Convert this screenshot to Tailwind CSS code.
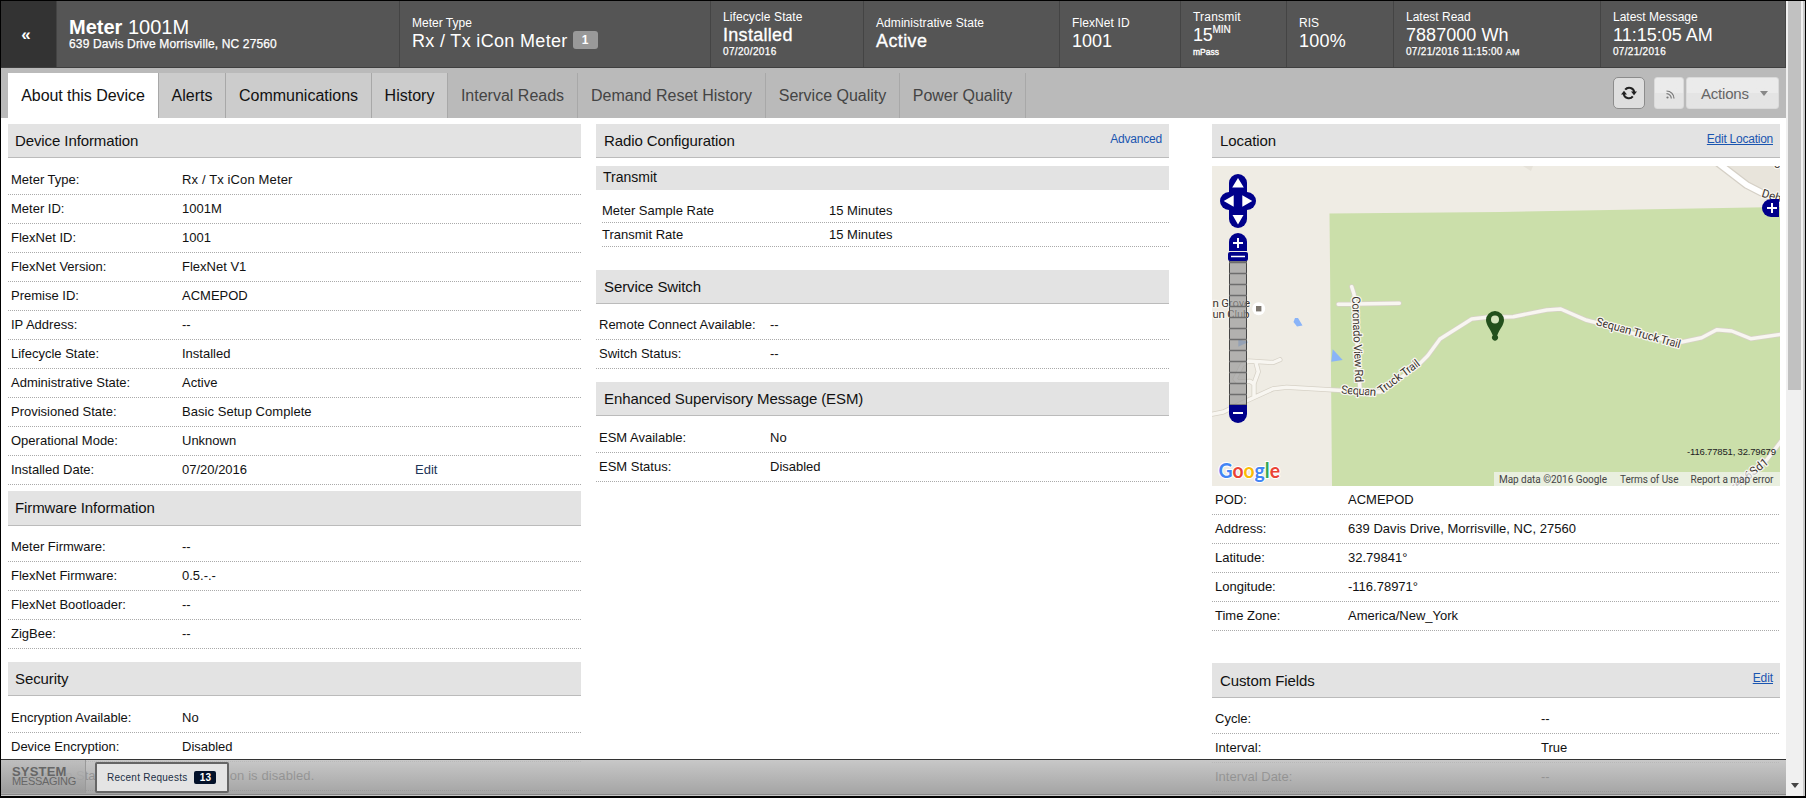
<!DOCTYPE html>
<html lang="en">
<head>
<meta charset="utf-8">
<title>Meter 1001M</title>
<script src="https://cdn.jsdelivr.net/npm/@tailwindcss/browser@4"></script>
</head>
<body class="w-[1806px] h-[798px] overflow-hidden bg-white font-['Liberation_Sans',Arial,sans-serif] text-[13px] leading-none text-[#111]">
<div class="relative flex w-[1806px] h-[798px] border border-black border-b-2 overflow-hidden">
  <div class="w-[1785px] flex flex-col shrink-0">

    <!-- device summary header -->
    <header class="flex h-[67px] shrink-0 bg-[#555] text-white text-[12px] border-b border-[#3f3f3f] [&>section]:flex [&>section]:flex-col [&>section]:justify-center [&>section]:pl-[12px] [&>section]:border-r [&>section]:border-[#444] whitespace-nowrap">
      <div class="w-[56px] bg-[#333] border-r border-[#444] flex items-center justify-center pr-[5px] text-[17px] font-bold">«</div>
      <section class="w-[343px] pb-[3px]">
        <div class="text-[20px] leading-[22px]"><b>Meter</b> 1001M</div>
        <div class="leading-[12px] tracking-[0.14px] [-webkit-text-stroke:0.25px_white]">639 Davis Drive Morrisville, NC 27560</div>
      </section>
      <section class="w-[311px]">
        <div class="-mt-px mb-px leading-[14px]">Meter Type</div>
        <div class="flex items-center text-[18px] leading-[21px] tracking-[0.33px]">Rx / Tx iCon Meter<span class="ml-[5px] mt-[-3px] w-[25px] h-[18px] rounded-[3px] bg-[#999] text-[12px] leading-[18px] font-bold text-center">1</span></div>
      </section>
      <section class="w-[153px]">
        <div class="-mt-px mb-px leading-[14px] tracking-[0.1px]">Lifecycle State</div>
        <div class="text-[18px] leading-[21px] tracking-[0.3px] [-webkit-text-stroke:0.3px_white]">Installed</div>
        <div class="text-[10px] leading-[12px] tracking-[0.35px] [-webkit-text-stroke:0.25px_white]">07/20/2016</div>
      </section>
      <section class="w-[196px]">
        <div class="-mt-px mb-px leading-[14px] tracking-[0.07px]">Administrative State</div>
        <div class="text-[18px] leading-[21px] tracking-[0.4px] [-webkit-text-stroke:0.3px_white]">Active</div>
      </section>
      <section class="w-[121px]">
        <div class="-mt-px mb-px leading-[14px] tracking-[0.1px]">FlexNet ID</div>
        <div class="text-[18px] leading-[21px]">1001</div>
      </section>
      <section class="w-[106px]">
        <div class="-mt-px mb-px leading-[14px] tracking-[0.2px]">Transmit</div>
        <div class="flex text-[18px] leading-[21px] tracking-[-0.3px]">15<span class="text-[10px] leading-[9px] tracking-normal [-webkit-text-stroke:0.2px_white]">MIN</span></div>
        <div class="text-[8.5px] leading-[12px] [-webkit-text-stroke:0.35px_white]">mPass</div>
      </section>
      <section class="w-[107px]">
        <div class="-mt-px mb-px leading-[14px]">RIS</div>
        <div class="text-[18px] leading-[21px] tracking-[0.2px]">100%</div>
      </section>
      <section class="w-[207px]">
        <div class="-mt-px mb-px leading-[14px]">Latest Read</div>
        <div class="text-[18px] leading-[21px] tracking-[0.05px]">7887000 Wh</div>
        <div class="text-[10px] leading-[12px] tracking-[0.3px] [-webkit-text-stroke:0.25px_white]">07/21/2016 11:15:00 <span class="text-[9px]">AM</span></div>
      </section>
      <section class="w-[185px]">
        <div class="-mt-px mb-px leading-[14px]">Latest Message</div>
        <div class="text-[18px] leading-[21px]">11:15:05 AM</div>
        <div class="text-[10px] leading-[12px] tracking-[0.3px] [-webkit-text-stroke:0.25px_white]">07/21/2016</div>
      </section>
    </header>

    <!-- tabs and actions -->
    <nav class="flex h-[50px] shrink-0 bg-[#bababa] pl-[7px] pt-[5px] text-[16px] text-[#444] whitespace-nowrap [&>a]:flex [&>a]:items-center [&>a]:justify-center [&>a]:border-r [&>a]:border-[#a8a8a8]">
      <a class="w-[151px] bg-white text-[#111] tracking-[-0.05px]">About this Device</a>
      <a class="w-[67px] bg-[#ccc] text-[#111]">Alerts</a>
      <a class="w-[146px] bg-[#ccc] text-[#111]">Communications</a>
      <a class="w-[76px] bg-[#ccc] text-[#111]">History</a>
      <a class="w-[130px]">Interval Reads</a>
      <a class="w-[188px]">Demand Reset History</a>
      <a class="w-[134px]">Service Quality</a>
      <a class="w-[126px]">Power Quality</a>
      <div class="ml-auto mr-[7px] mt-[4px] flex h-[32px]">
        <button class="w-[32px] h-[32px] rounded-[5px] border border-[#8c8c8c] bg-[#dedede] flex items-center justify-center">
          <svg width="16" height="14" viewBox="0 0 16 14" fill="none" stroke="#222" stroke-width="2"><path d="M4.200 3.700A5 5 0 0 1 13.200 6.500"/><path d="M11.800 10.300A5 5 0 0 1 2.800 7.500"/><path d="M0 8.500h6L3 4.700z M16 5.500h-6L13 9.300z" fill="#222" stroke="none"/></svg>
        </button>
        <button class="ml-[9px] w-[30px] h-[32px] rounded-[3px] border border-[#dadada] bg-gradient-to-b from-[#ebebeb] from-50% to-[#e4e4e4] to-50% flex items-center justify-center pl-[3px] pt-[3px]">
          <svg width="9" height="9" viewBox="0 0 9 9" fill="none" stroke="#777" stroke-width="1.2"><path d="M.5 1A7.500 7.500 0 0 1 8 8.500M.5 3.700A4.800 4.800 0 0 1 5.300 8.500"/><circle cx="1.500" cy="7.500" r="1.100" fill="#777" stroke="none"/></svg>
        </button>
        <button class="ml-[2px] w-[93px] h-[32px] rounded-[3px] border border-[#dadada] bg-gradient-to-b from-[#ebebeb] from-50% to-[#e4e4e4] to-50% flex items-center pl-[14px] text-[15px] tracking-[-0.2px] text-[#666]">Actions<svg class="ml-[11px]" width="8" height="5" viewBox="0 0 8 5"><path d="M0 0h8L4 5z" fill="#888"/></svg></button>
      </div>
    </nav>

    <!-- three content columns -->
    <main class="flex pl-[7px] pt-[6px] [&_h2]:flex [&_h2]:items-center [&_h2]:justify-between [&_h2]:h-[34px] [&_h2]:shrink-0 [&_h2]:px-[7px] [&_h2]:text-[15px] [&_h2]:tracking-[-0.1px] [&_h2]:bg-[#e3e3e3] [&_h2]:border-b [&_h2]:border-[#bbb] [&_dl>div]:flex [&_dl>div]:items-center [&_dl>div]:h-[29px] [&_dl>div]:border-b [&_dl>div]:border-dotted [&_dl>div]:border-[#aaa] [&_dl>div]:pl-[3px] [&_dl>div]:pb-[1px] [&_dt]:shrink-0 whitespace-nowrap">
      <div class="w-[573px] flex flex-col">
        <h2>Device Information</h2>
        <dl class="mt-[8px] [&_dt]:w-[171px]">
          <div><dt>Meter Type:</dt><dd class="tracking-[0.13px]">Rx / Tx iCon Meter</dd></div>
          <div><dt>Meter ID:</dt><dd>1001M</dd></div>
          <div><dt>FlexNet ID:</dt><dd>1001</dd></div>
          <div><dt>FlexNet Version:</dt><dd>FlexNet V1</dd></div>
          <div><dt>Premise ID:</dt><dd>ACMEPOD</dd></div>
          <div><dt>IP Address:</dt><dd>--</dd></div>
          <div><dt>Lifecycle State:</dt><dd>Installed</dd></div>
          <div><dt>Administrative State:</dt><dd>Active</dd></div>
          <div><dt>Provisioned State:</dt><dd class="tracking-[0.05px]">Basic Setup Complete</dd></div>
          <div><dt>Operational Mode:</dt><dd>Unknown</dd></div>
          <div><dt>Installed Date:</dt><dd class="w-[233px]">07/20/2016</dd><dd class="text-[#1c3557]">Edit</dd></div>
        </dl>
        <h2 class="mt-[6px] !h-[35px] pb-px">Firmware Information</h2>
        <dl class="mt-[7px] [&_dt]:w-[171px]">
          <div><dt>Meter Firmware:</dt><dd>--</dd></div>
          <div><dt>FlexNet Firmware:</dt><dd>0.5.-.-</dd></div>
          <div><dt>FlexNet Bootloader:</dt><dd>--</dd></div>
          <div><dt>ZigBee:</dt><dd>--</dd></div>
        </dl>
        <h2 class="mt-[13px]">Security</h2>
        <dl class="mt-[8px] [&_dt]:w-[171px]">
          <div><dt>Encryption Available:</dt><dd>No</dd></div>
          <div><dt>Device Encryption:</dt><dd>Disabled</dd></div>
          <div><dt>Encryption Status:</dt><dd class="tracking-[0.1px]">Encryption is disabled.</dd></div>
        </dl>
      </div>

      <div class="ml-[15px] w-[573px] flex flex-col [&>h2]:pl-[8px]">
        <h2>Radio Configuration<a class="text-[12px] text-[#1a55b0] pb-[4px] tracking-[-0.2px]">Advanced</a></h2>
        <div class="mt-[8px] h-[24px] shrink-0 bg-[#e3e3e3] pl-[7px] pb-[2px] flex items-center text-[14px]">Transmit</div>
        <dl class="ml-[6px] mt-[9px] [&_dt]:w-[227px] [&>div]:!h-[24px] [&>div]:!pl-0">
          <div><dt>Meter Sample Rate</dt><dd>15 Minutes</dd></div>
          <div><dt>Transmit Rate</dt><dd>15 Minutes</dd></div>
        </dl>
        <h2 class="mt-[23px]">Service Switch</h2>
        <dl class="mt-[7px] [&_dt]:w-[171px]">
          <div><dt>Remote Connect Available:</dt><dd>--</dd></div>
          <div><dt>Switch Status:</dt><dd>--</dd></div>
        </dl>
        <h2 class="mt-[13px]">Enhanced Supervisory Message (ESM)</h2>
        <dl class="mt-[8px] [&_dt]:w-[171px]">
          <div><dt>ESM Available:</dt><dd>No</dd></div>
          <div><dt>ESM Status:</dt><dd>Disabled</dd></div>
        </dl>
      </div>

      <div class="ml-[43px] w-[568px] flex flex-col [&>h2]:pl-[8px]">
        <h2>Location<a class="text-[12px] text-[#1a55b0] underline pb-[4px] tracking-[-0.25px]">Edit Location</a></h2>
        <svg class="mt-[8px] shrink-0" width="568" height="320" viewBox="0 0 568 320" font-family="Roboto, sans-serif">
          <rect width="568" height="320" fill="#efece4"/>
          <path d="M514 0H568V40L548 26 536 18z" fill="#e8e4db"/>
          <path d="M311 0h10l-2 5z" fill="#e6e2d9"/>
          <path d="M117.500 47.500L288 46 568 41V320H120L118.500 150z" fill="#cbdfaa"/>
          <g fill="#8ab4f8"><path d="M83 152h3l4.500 7.500-5.500 1-3.500-4.500zM26.300 173.300l10 2.700-10 4.700zM120.700 183.300l10 10.700-11.400 1.700z"/></g>
          <defs>
            <path id="roads" d="M68 193.700L61.300 196.500 36.300 195 30 199 23 213 26 216 38 215.300 42 218M44 196.700l2.300 9-4.300 12v13M139.700 120.700L142 128 148 224M126.300 138.300l61-1M-4 249L11.300 246 31.300 236.300 61.300 222.700 74.700 221.300 126.300 224.300 168 226 204.700 200.700 215.700 189.700 228 173 259.700 153 274.700 151.300 301.300 150.700 334.700 144 348.700 143 374.700 154.300 384.700 156.700 430 170 469.700 176 489.700 171.700 504.700 163.700 519.700 165 538.700 172.700 572 168M570 274L554.700 294 521 322"/>
          </defs>
          <g fill="none" stroke-linejoin="round" stroke-linecap="round">
            <use href="#roads" stroke="#d6d1c6" stroke-width="5"/>
            <use href="#roads" stroke="#f8f6f1" stroke-width="3.500"/>
            <path d="M506 -3L534.700 19 560 32" stroke="#d5d0c6" stroke-width="8"/>
            <path d="M506 -3L534.700 19 560 32" stroke="#fff" stroke-width="5.500"/>
          </g>
          <circle cx="46.700" cy="142.700" r="6.500" fill="#fff"/><rect x="44" y="140" width="5.400" height="5.400" fill="#7d776f"/>
          <g font-size="11.500" fill="#3b342e" stroke="#f8f6f1" stroke-width="2.500" paint-order="stroke" stroke-linejoin="round">
            <text x="0.500" y="141" textLength="37.500">n Grove</text>
            <text x="0.500" y="152" textLength="37">un Club</text>
            <text transform="translate(140 130.500) rotate(87.800)" textLength="86">Coronado View Rd</text>
            <text transform="translate(129 227.500) rotate(4)" textLength="35">Sequan</text>
            <text transform="translate(169.500 228.500) rotate(-37)" textLength="49">Truck Trail</text>
            <text transform="translate(383.500 159) rotate(15.500)" textLength="87">Sequan Truck Trail</text>
            <text transform="translate(549 30.500) rotate(17)">Deh</text>
            <text x="562" y="2">c</text>
            <text transform="translate(523 325) rotate(-39)" textLength="44">re16Sd1</text>
          </g>
          <!-- marker -->
          <path d="M283 145a9 9 0 0 1 9 9c0 5-4.500 9-6.800 15.500a3 3 0 1 1-4.400 0C278.500 163 274 159 274 154a9 9 0 0 1 9-9z" fill="#23501c"/>
          <circle cx="283" cy="153.500" r="4" fill="#d5e4bd"/>
          <!-- pan and zoom controls -->
          <rect x="17.500" y="95" width="17" height="144" fill="#999" fill-opacity=".7" stroke="#444"/>
          <path d="M17 96.500h18M17 107.500h18M17 118.500h18M17 129.500h18M17 140.500h18M17 151.500h18M17 162.500h18M17 173.500h18M17 184.500h18M17 195.500h18M17 206.500h18M17 217.500h18M17 228.500h18" stroke="#6d6d6d" stroke-width="1.500"/>
          <g fill="#00008b">
            <rect x="17" y="8" width="18" height="54" rx="9"/><rect x="8" y="26" width="36" height="18" rx="9"/>
            <path d="M17 85V76a9 9 0 0 1 18 0v9z"/><rect x="16" y="86" width="20" height="9" rx="2"/>
            <path d="M17 239h18v9a9 9 0 0 1-18 0z"/>
            <path d="M567 33h-8a9 9 0 0 0 0 18h8z"/>
          </g>
          <path d="M26 12l5.800 9.500H20.200zM11.700 35l10-5.800v11.600zM40.300 35l-10-5.800v11.600zM26 58.500l5.500-9.500h-11z" fill="#fff"/>
          <path d="M21 77h10M26 72v10M555 42h10M560 37v10M21 247h10" stroke="#fff" stroke-width="2"/>
          <path d="M19 90.500h14" stroke="#fff" stroke-width="1.500"/>
          <text x="6.500" y="312" font-size="20" font-weight="700" textLength="61.500" lengthAdjust="spacingAndGlyphs" stroke="#fff" stroke-width="2" paint-order="stroke" font-family="Lato, sans-serif"><tspan fill="#4285f4">G</tspan><tspan fill="#ea4335">o</tspan><tspan fill="#fbbc05">o</tspan><tspan fill="#4285f4">g</tspan><tspan fill="#34a853">l</tspan><tspan fill="#ea4335">e</tspan></text>
          <rect x="282" y="306" width="286" height="14" fill="#f5f5f5" fill-opacity=".7"/>
          <g font-size="10" fill="#444"><text x="287" y="316.500" textLength="108">Map data ©2016 Google</text><text x="408" y="316.500" textLength="58.500">Terms of Use</text><text x="478.500" y="316.500" textLength="83">Report a map error</text></g>
          <text x="475" y="289" font-size="9.500" fill="#222" textLength="89" font-family="Liberation Sans">-116.77851, 32.79679</text>
        </svg>
        <dl class="mr-px [&_dt]:w-[133px]">
          <div><dt>POD:</dt><dd>ACMEPOD</dd></div>
          <div><dt>Address:</dt><dd class="tracking-[0.03px]">639 Davis Drive, Morrisville, NC, 27560</dd></div>
          <div><dt>Latitude:</dt><dd>32.79841°</dd></div>
          <div><dt>Longitude:</dt><dd>-116.78971°</dd></div>
          <div><dt>Time Zone:</dt><dd>America/New_York</dd></div>
        </dl>
        <h2 class="mt-[32px] !h-[35px]">Custom Fields<a class="text-[12px] text-[#1a55b0] underline pb-[4px] tracking-[-0.1px]">Edit</a></h2>
        <dl class="mr-px mt-[7px] [&_dt]:w-[326px]">
          <div><dt>Cycle:</dt><dd>--</dd></div>
          <div><dt>Interval:</dt><dd>True</dd></div>
          <div><dt>Interval Date:</dt><dd>--</dd></div>
        </dl>
      </div>
    </main>
  </div>

  <!-- vertical scrollbar -->
  <div class="w-[17px] shrink-0 bg-[#f0f0f0] flex flex-col items-center justify-between pb-[8px]">
    <div class="w-[13px] h-[389px] bg-[#c1c1c1]"></div>
    <svg width="8" height="5" viewBox="0 0 8 5"><path d="M0 0h8L4 5z" fill="#444"/></svg>
  </div>
  <div class="w-[2px] shrink-0 bg-[#c8c8c8]"></div>

  <!-- system messaging bar -->
  <footer class="absolute left-0 bottom-0 w-[1785px] h-[37px] border-t border-[#333] bg-gradient-to-b from-[#bebebe]/85 to-[#929292]/85 bg-clip-padding flex">
    <div class="w-[85px] h-[33px] border-r border-[#999] bg-gradient-to-b from-[#bdbdbd]/80 to-[#999]/80 pl-[11px] pt-[6px] text-[#666]">
      <div class="text-[13px] leading-[11px] font-bold tracking-[0.2px]">SYSTEM</div>
      <div class="text-[11px] leading-[9px] tracking-[-0.3px]">MESSAGING</div>
    </div>
    <button class="ml-[9px] mt-[2px] w-[134px] h-[31px] rounded-[2px] border-2 border-[#666] bg-[#e4e4e4] flex items-center pl-[10px] text-[10px] tracking-[0.25px] text-[#222f44]">Recent Requests<span class="ml-[7px] w-[22px] h-[13px] rounded-[2px] bg-[#04122a] text-white font-bold leading-[13px] text-center">13</span></button>
    <div class="absolute left-0 bottom-0 w-full h-[2px] bg-[#c8c8c8] border-t border-[#888]"></div>
  </footer>
</div>
</body>
</html>
